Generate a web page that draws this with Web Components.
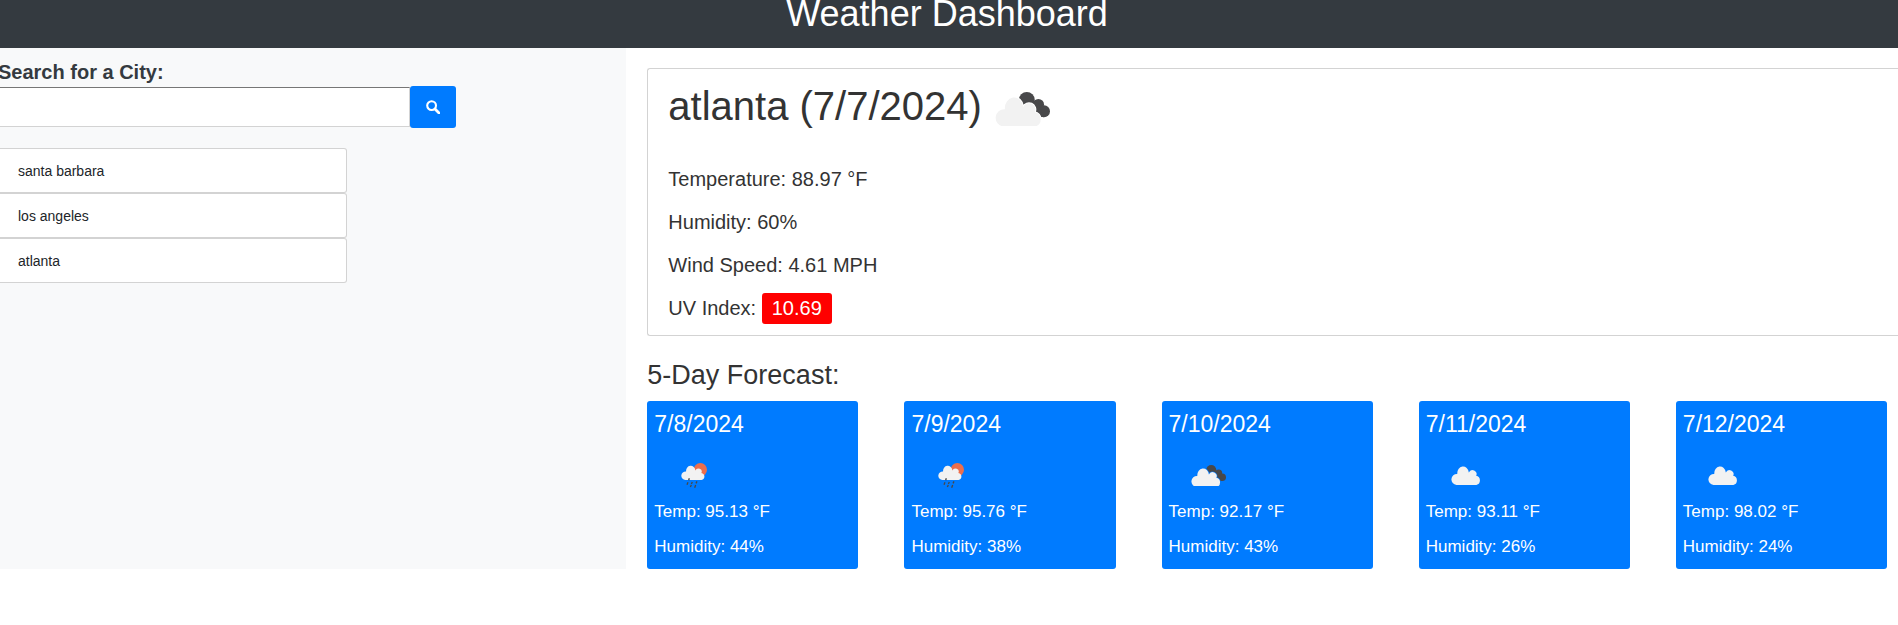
<!DOCTYPE html>
<html lang="en">
<head>
<meta charset="utf-8">
<title>Weather Dashboard</title>
<style>
  body { margin: 0; background: #fff; color: #333; font-family: "Liberation Sans", Arial, sans-serif; overflow-x: hidden; }
</style>
</head>
<body>
<weather-app></weather-app>

<script>
const define = (name, html) => {
  const template = document.createElement('template');
  template.innerHTML = html;
  customElements.define(name, class extends HTMLElement {
    constructor() {
      super();
      this.attachShadow({ mode: 'open' }).append(template.content.cloneNode(true));
    }
  });
};

const CLOUD = '<path d="M70 140A26 26 0 0 1 74 88A27 31 0 0 1 129 81A19 19 0 0 1 164 97A22 22 0 0 1 165 140Z"/>';
const ICONS = {
  cloud: `<svg viewBox="44 50 143 90"><g fill="#f2f2f2">${CLOUD}</g></svg>`,
  clouds: `<svg viewBox="44 36 166 104">
    <mask id="gap" maskUnits="userSpaceOnUse" x="44" y="36" width="166" height="104">
      <rect x="44" y="36" width="166" height="104" fill="#fff"/>
      <g fill="#000" stroke="#000" stroke-width="6">${CLOUD}</g>
    </mask>
    <g fill="#48484a" mask="url(#gap)">
      <circle cx="140" cy="60" r="24"/><circle cx="175" cy="74" r="17"/><circle cx="192" cy="94" r="18"/>
      <path d="M140 60L175 70L192 112L176 110L130 84Z"/>
    </g>
    <g fill="#f2f2f2">${CLOUD}</g></svg>`,
  rain: `<svg viewBox="63 38 78 75">
    <circle cx="121" cy="58" r="20" fill="#ec6e4c"/>
    <g fill="#f2f2f2" transform="translate(40.5 20.5) scale(.51 .49)">${CLOUD}</g>
    <g stroke="#48484a" stroke-width="4">
      <path d="M88 84l-2 6M84 96l-3 7M97 95l-3 6M111 93l-3 6M94 104l-3 6M107 104l-3 8"/>
    </g></svg>`
};

customElements.define('weather-icon', class extends HTMLElement {
  connectedCallback() {
    if (!this.shadowRoot) this.attachShadow({ mode: 'open' });
    this.shadowRoot.innerHTML = `<style>
      :host { display: block; }
      :host([kind="cloud"]) { width: 30px; }
      :host([kind="clouds"]) { width: 35px; }
      :host([kind="rain"]) { width: 26px; }
      svg { display: block; width: 100%; }
    </style>${ICONS[this.getAttribute('kind')]}`;
  }
});

define('app-header', `<style>
  :host { display: block; background: #343a40; color: #fff; text-align: center; padding: 0 4px 20px 0; }
  h1 { margin: 0; font-size: 36px; line-height: 28px; font-weight: 400; }
</style><h1><slot></slot></h1>`);

define('city-search', `<style>
  :host { display: block; }
  label { display: block; margin-left: -2px; font-size: 20px; line-height: 24px; font-weight: 700; color: #343a40; }
  form { display: flex; max-width: 456px; margin: 2px 0 0; }
  input { flex: 1; min-width: 0; box-sizing: border-box; margin: 1px 0; padding: 0 16px; background: #fff;
    border: 1px solid #d3d3d3; border-top-color: #767676; border-left: 0; border-radius: 0; font: 16px "Liberation Sans", sans-serif; }
  button { display: flex; align-items: center; justify-content: center; width: 46px; height: 42px; padding: 0;
    border: 0; border-radius: 3px; background: #007bff; color: #fff; }
  svg { width: 14px; height: 14px; }
</style>
<label for="city">Search for a City:</label>
<form>
  <input id="city" type="text">
  <button type="submit" aria-label="Search"><svg viewBox="0 0 14 14" fill="none" stroke="currentColor">
    <circle cx="5.6" cy="5.6" r="4.4" stroke-width="2.1"/><path d="M9 9l4 4" stroke-width="2.8" stroke-linecap="round"/></svg></button>
</form>`);

define('city-item', `<style>
  :host { display: block; }
  button { display: block; width: 100%; height: 45px; box-sizing: border-box; padding: 0 18px; text-align: left;
    background: #fff; border: 1px solid #d3d3d3; border-left: 0; border-radius: 0 3px 3px 0;
    font: 14px "Liberation Sans", sans-serif; color: #212529; }
</style><button type="button"><slot></slot></button>`);

define('side-bar', `<style>
  :host { display: block; box-sizing: border-box; padding-top: 12px; background: #f8f9fa; }
  nav { max-width: 347px; margin-top: 20px; }
</style><city-search></city-search>
<nav><city-item>santa barbara</city-item><city-item>los angeles</city-item><city-item>atlanta</city-item></nav>`);

define('current-weather', `<style>
  :host { display: block; border: 1px solid #d3d3d3; border-right: 0; border-radius: 3px 0 0 3px; padding: 13px 20px 15px; }
  h2 { display: flex; align-items: center; gap: 13px; margin: 0 0 37px; font-size: 40px; line-height: 48px; font-weight: 400; }
  weather-icon { width: 55px; padding-top: 6px; }
  p { margin: 0 0 19px; font-size: 20px; line-height: 24px; }
  p:last-child { margin: 0; }
  .uv { padding: 4px 10px 5px; border-radius: 3px; background: #f00; color: #fff; }
</style>
<h2>atlanta (7/7/2024) <weather-icon kind="clouds"></weather-icon></h2>
<p>Temperature: 88.97 °F</p>
<p>Humidity: 60%</p>
<p>Wind Speed: 4.61 MPH</p>
<p>UV Index: <span class="uv">10.69</span></p>`);

define('day-card', `<style>
  :host { display: block; box-sizing: border-box; padding: 9px 7px 12px; border-radius: 3px; background: #007bff; color: #fff; }
  h3 { margin: 0; font-size: 23px; line-height: 28px; font-weight: 400; }
  .icon { display: flex; align-items: center; justify-content: center; box-sizing: border-box; width: 80px; height: 64px; padding-top: 11px; }
  p { margin: 0 0 15px; font-size: 17px; line-height: 20px; }
  p:last-child { margin: 0; }
</style>
<h3><slot name="date"></slot></h3>
<div class="icon"><slot name="icon"></slot></div>
<p>Temp: <slot name="temp"></slot> °F</p>
<p>Humidity: <slot name="humidity"></slot>%</p>`);

const days = [
  ['7/8/2024', 'rain', '95.13', 44], ['7/9/2024', 'rain', '95.76', 38], ['7/10/2024', 'clouds', '92.17', 43],
  ['7/11/2024', 'cloud', '93.11', 26], ['7/12/2024', 'cloud', '98.02', 24]
];
define('five-day-forecast', `<style>
  :host { display: block; padding-right: 11px; }
  h2 { margin: 0 0 10px; font-size: 27px; line-height: 32px; font-weight: 400; }
  section { display: grid; grid-template-columns: repeat(5, 1fr); gap: 46px; }
</style>
<h2>5-Day Forecast:</h2>
<section>${days.map(([date, icon, temp, humidity]) => `<day-card>
  <span slot="date">${date}</span><weather-icon slot="icon" kind="${icon}"></weather-icon>
  <span slot="temp">${temp}</span><span slot="humidity">${humidity}</span></day-card>`).join('')}</section>`);

define('weather-app', `<style>
  :host { display: block; }
  .columns { display: grid; grid-template-columns: 33fr 67fr; }
  main { min-width: 0; padding: 20px 0 0 21px; }
  five-day-forecast { margin-top: 23px; }
</style>
<app-header>Weather Dashboard</app-header>
<div class="columns">
  <side-bar></side-bar>
  <main><current-weather></current-weather><five-day-forecast></five-day-forecast></main>
</div>`);
</script>
</body>
</html>
